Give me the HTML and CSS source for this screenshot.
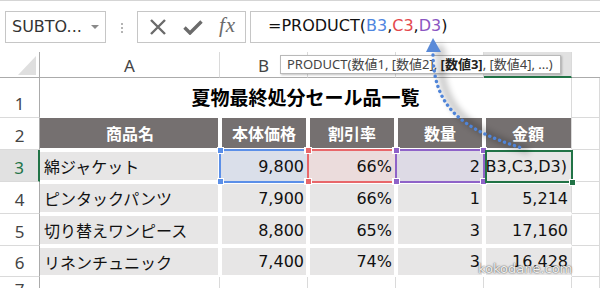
FILE: index.html
```html
<!DOCTYPE html>
<html lang="ja">
<head>
<meta charset="utf-8">
<link rel="stylesheet" href="styles.css">
</head>
<body>
<div class="page">
  <div class="toolbar">
    <div class="namebox"><span>SUBTO...</span><span class="caret"></span></div>
    <div class="grip"><i></i><i></i><i></i></div>
    <div class="btns">
      <span class="ico"><svg width="18" height="16" viewBox="0 0 18 16"><path d="M2 1 L16 15 M16 1 L2 15" stroke="#6b6b6b" stroke-width="2.4" fill="none"/></svg></span>
      <span class="ico"><svg width="20" height="15" viewBox="0 0 20 15"><path d="M1.5 7.5 L7 13 L18.5 1.5" stroke="#6b6b6b" stroke-width="3.4" fill="none"/></svg></span>
      <span class="ico fx">fx</span>
    </div>
    <div class="formula">=PRODUCT(<span class="rb">B3</span>,<span class="rc">C3</span>,<span class="rd">D3</span>)</div>
  </div>

  <div class="sheet">
    <div class="corner"><span class="tri"></span></div>
    <div class="ch">A</div>
    <div class="ch">B</div>
    <div class="ch">C</div>
    <div class="ch">D</div>
    <div class="ch sel">E</div>
    <div class="ch last"></div>

    <div class="rh">1</div>
    <div class="title">夏物最終処分セール品一覧</div>
    <div class="c"></div>

    <div class="rh">2</div>
    <div class="f h first">商品名</div>
    <div class="f h">本体価格</div>
    <div class="f h">割引率</div>
    <div class="f h">数量</div>
    <div class="f h end">金額</div>
    <div class="c"></div>

    <div class="rh sel">3</div>
    <div class="f first">綿ジャケット</div>
    <div class="f num hb">9,800</div>
    <div class="f num hc">66%</div>
    <div class="f num hd">2</div>
    <div class="f num end edit"><span>=PRODUCT(B3,C3,D3)</span></div>
    <div class="c"></div>

    <div class="rh">4</div>
    <div class="f first">ピンタックパンツ</div>
    <div class="f num">7,900</div>
    <div class="f num">66%</div>
    <div class="f num">1</div>
    <div class="f num end">5,214</div>
    <div class="c"></div>

    <div class="rh">5</div>
    <div class="f first">切り替えワンピース</div>
    <div class="f num">8,800</div>
    <div class="f num">65%</div>
    <div class="f num">3</div>
    <div class="f num end">17,160</div>
    <div class="c"></div>

    <div class="rh">6</div>
    <div class="f first">リネンチュニック</div>
    <div class="f num">7,400</div>
    <div class="f num">74%</div>
    <div class="f num">3</div>
    <div class="f num end">16,428</div>
    <div class="c"></div>

    <div class="rh r7">7</div>
    <div class="c"></div>
    <div class="c"></div>
    <div class="c"></div>
    <div class="c"></div>
    <div class="c"></div>
    <div class="c"></div>
  </div>

  <div class="box bx-b"><i class="hdl tl"></i><i class="hdl tr"></i><i class="hdl bl"></i><i class="hdl br"></i></div>
  <div class="box bx-c"><i class="hdl tl"></i><i class="hdl tr"></i><i class="hdl bl"></i><i class="hdl br"></i></div>
  <div class="box bx-d"><i class="hdl tl"></i><i class="hdl tr"></i><i class="hdl bl"></i><i class="hdl br"></i></div>
  <div class="box bx-e"><i class="fillh"></i></div>

  <div class="tip">PRODUCT(数値1, [数値2], <b>[数値3]</b>, [数値4], ...)</div>

  <svg class="arrow" width="600" height="288" viewBox="0 0 600 288">
    <defs>
      <filter id="bl" x="-20%" y="-20%" width="140%" height="140%"><feGaussianBlur stdDeviation="3"/></filter>
    </defs>
    <g filter="url(#bl)" opacity="0.22">
      <path d="M440 58 C441 108, 467 131, 529 151" stroke="#000" stroke-width="7" fill="none"/>
      <polygon points="440,42 433,56 448,56" fill="#000"/>
    </g>
    <path d="M433 55 C434 106, 460 129, 522 148" stroke="#4f84d8" stroke-width="3.4" stroke-linecap="round" stroke-dasharray="0.1 5.2" fill="none"/>
    <polygon points="433,38 426,52 441,52" fill="#5a8ad8"/>
  </svg>

  <div class="wm">kokodane.com</div>
</div>
</body>
</html>
```

FILE: styles.css
```css
html, body {
  margin: 0;
  padding: 0;
  background: #fff;
}
body {
  width: 600px;
  height: 288px;
  overflow: hidden;
  font-family: "DejaVu Sans", "Noto Sans CJK JP", sans-serif;
}
.page {
  position: relative;
  width: 600px;
  height: 288px;
  overflow: hidden;
}

/* ---------- formula bar ---------- */
.toolbar {
  height: 52px;
  box-sizing: border-box;
  border-top: 1px solid #d5d5d5;
  padding-top: 10px;
  display: flex;
  align-items: flex-start;
}
.namebox {
  margin-left: 5px;
  width: 101px;
  height: 32px;
  box-sizing: border-box;
  border: 1px solid #c6c6c6;
  display: flex;
  align-items: center;
  justify-content: space-between;
  padding: 0 6px 2px 6px;
  font-size: 16px;
  color: #333;
}
.caret {
  width: 0;
  height: 0;
  border-left: 4px solid transparent;
  border-right: 4px solid transparent;
  border-top: 4px solid #8a8a8a;
  margin-top: 2px;
}
.grip {
  width: 31px;
  padding-top: 12px;
  display: flex;
  flex-direction: column;
  align-items: center;
  gap: 2px;
}
.grip i {
  display: block;
  width: 2px;
  height: 2px;
  background: #b4b4b4;
}
.btns {
  width: 109px;
  height: 32px;
  box-sizing: border-box;
  border: 1px solid #c6c6c6;
  display: flex;
  align-items: center;
  padding-left: 2px;
}
.ico {
  width: 36px;
  display: flex;
  justify-content: center;
  align-items: center;
}
.fx {
  font-family: "Liberation Serif", "DejaVu Serif", serif;
  font-style: italic;
  font-size: 21px;
  color: #6b6b6b;
  padding-bottom: 3px;
  letter-spacing: 1px;
}
.formula {
  margin-left: 4px;
  flex: 1;
  height: 32px;
  box-sizing: border-box;
  border: 1px solid #c6c6c6;
  border-right: 0;
  padding: 0 0 4px 17px;
  display: flex;
  align-items: center;
  font-size: 16px;
  color: #111;
  white-space: pre;
}
.rb { color: #4f86df; }
.rc { color: #e4484d; }
.rd { color: #8a56c2; }

/* ---------- grid ---------- */
.sheet {
  display: grid;
  grid-template-columns: 40px 180px 88px 88px 88px 88px 28px;
  grid-template-rows: 26px 40px 32px 32px 32px 32px 31px 32px;
}
.sheet > div {
  box-sizing: border-box;
  display: flex;
  align-items: center;
  white-space: nowrap;
  overflow: hidden;
}
.corner {
  border-right: 1px solid #ababab;
  border-bottom: 1px solid #ababab;
  justify-content: flex-end;
  align-items: flex-end !important;
  padding: 0 3px 2px 0;
}
.tri {
  display: block;
  width: 18px;
  height: 19px;
  background: #dfdfdf;
  clip-path: polygon(100% 0, 100% 100%, 0 100%);
}
.ch {
  justify-content: center;
  border-right: 1px solid #dadada;
  border-bottom: 1px solid #ababab;
  font-family: "Noto Sans", sans-serif;
  font-size: 17px;
  color: #444;
  padding-top: 1px;
}
.ch.sel {
  background: #e1e1e1;
  border-bottom: 2px solid #217346;
  color: #217346;
}
.ch.last { border-right: 0; }
.rh {
  justify-content: center;
  align-items: flex-end !important;
  border-right: 1px solid #ababab;
  border-bottom: 1px solid #dadada;
  font-family: "Noto Sans", sans-serif;
  font-size: 17px;
  line-height: 1;
  padding-bottom: 5px;
  color: #444;
}
.rh.r7 {
  align-items: flex-start !important;
  padding: 4px 0 0 0;
}
.rh.sel {
  background: #e1e1e1;
  color: #217346;
  border-right: 2px solid #217346;
}
.c {
  border-right: 1px solid #dadada;
  border-bottom: 1px solid #dadada;
}
.title {
  grid-column: span 5;
  justify-content: center;
  border-right: 1px solid #dadada;
  font-family: "Noto Sans CJK JP", sans-serif;
  font-weight: 700;
  font-size: 19px;
  color: #000;
  padding-bottom: 4px;
}
.f {
  background: #e7e6e6;
  border: 2px solid #fff;
  padding: 0 2px;
  font-size: 16px;
  color: #111;
}
.f.first { border-left: 0; padding-left: 4px; }
.f.end { border-right: 1px solid #dadada; padding-right: 3px; }
.f.h {
  background: #757070;
  border-top: 0;
  justify-content: center;
  color: #fff;
  font-family: "Noto Sans CJK JP", sans-serif;
  font-weight: 700;
  font-size: 16px;
}
.num { justify-content: flex-end; }
.hb { background: #dadfea; border-color: #dadfea; }
.hc { background: #ebdcdc; border-color: #ebdcdc; }
.hd { background: #dddae5; border-color: #dddae5; }
.edit { border-color: #e7e6e6 !important; padding-right: 4px !important; }

/* ---------- overlays ---------- */
.box {
  position: absolute;
  box-sizing: border-box;
  border: 2px solid;
  top: 149px;
  height: 34px;
}
.bx-b { left: 219px; width: 90px; border-color: #5b8fe8; color: #5b8fe8; }
.bx-c { left: 307px; width: 90px; border-color: #e8676a; color: #e8676a; }
.bx-d { left: 395px; width: 90px; border-color: #8f63c8; color: #8f63c8; }
.bx-e { left: 485px; width: 88px; border-color: #217346; color: #217346; top: 150px; height: 33px; }
.hdl {
  position: absolute;
  width: 7px;
  height: 7px;
  box-sizing: border-box;
  background: currentColor;
  border: 1px solid #fff;
}
.tl { top: -4px; left: -4px; }
.tr { top: -4px; right: -4px; }
.bl { bottom: -4px; left: -4px; }
.br { bottom: -4px; right: -4px; }
.fillh {
  position: absolute;
  right: -5px;
  bottom: -5px;
  width: 7px;
  height: 7px;
  box-sizing: border-box;
  background: #217346;
  border: 1px solid #fff;
}
.tip {
  position: absolute;
  left: 280px;
  top: 55px;
  width: 281px;
  height: 19px;
  box-sizing: border-box;
  border: 1px solid #b9b9b9;
  background: #fff;
  box-shadow: 1px 1px 2px rgba(0,0,0,0.25);
  font-family: "Noto Sans", "Noto Sans CJK JP", sans-serif;
  font-size: 13px;
  line-height: 17px;
  padding-left: 6px;
  color: #444;
  white-space: nowrap;
  overflow: hidden;
}
.tip b { color: #222; font-weight: 700; }
.arrow {
  position: absolute;
  left: 0;
  top: 0;
  pointer-events: none;
}
.wm {
  position: absolute;
  left: 478px;
  top: 261px;
  font-family: "DejaVu Sans", sans-serif;
  font-size: 13px;
  color: rgba(255,255,255,0.92);
  text-shadow: 0 0 2px rgba(0,0,0,0.55), 0 0 1px rgba(0,0,0,0.5);
}
```
